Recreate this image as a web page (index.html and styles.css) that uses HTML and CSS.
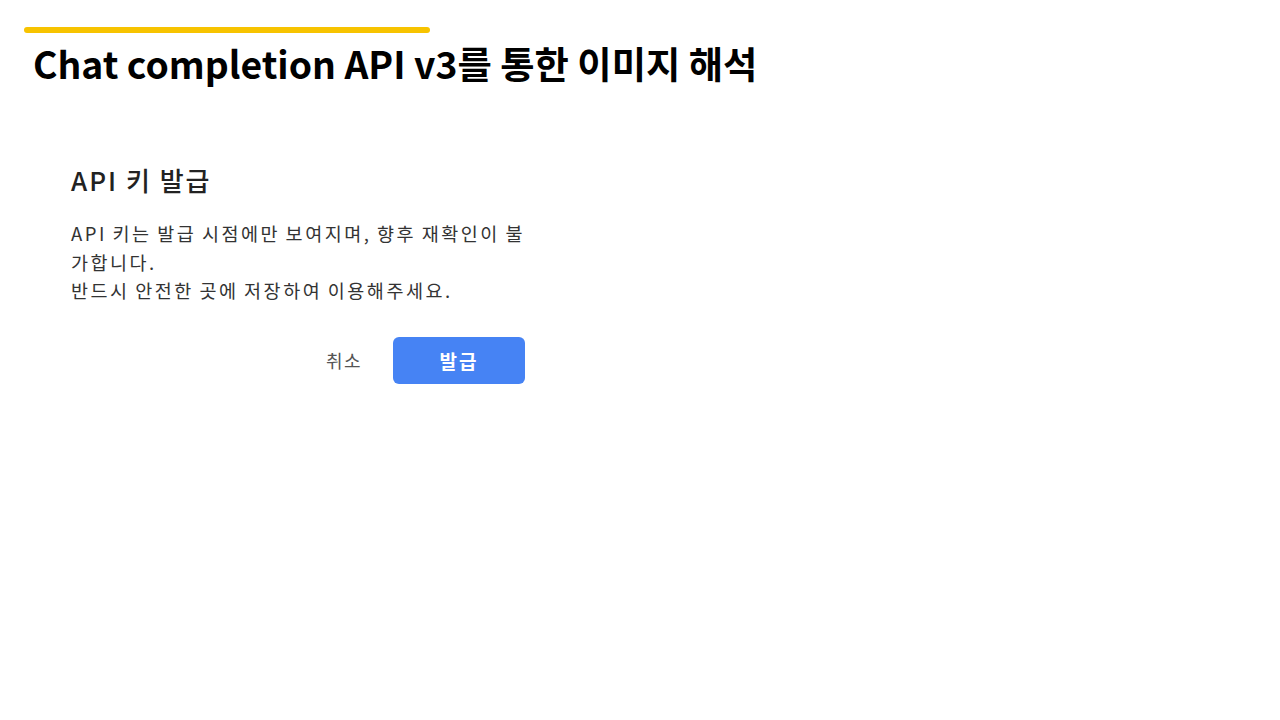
FILE: index.html
```html
<!DOCTYPE html>
<html>
<head>
    <title>Chat completion API v3</title>
    <meta charset="UTF-8">
    <meta name="viewport" content="width=device-width, initial-scale=1">
    <link rel="stylesheet" href="styles.css">
</head>
<body>
    <div class="slide">
        <div class="accent"></div>
        <h1 class="title">Chat completion API v3를 통한 이미지 해석</h1>
        <div class="dialog">
            <h3>API 키 발급</h3>
            <p>API 키는 발급 시점에만 보여지며, 향후 재확인이 불가합니다.<br>반드시 안전한 곳에 저장하여 이용해주세요.</p>
            <div class="actions">
                <button class="cancel">취소</button>
                <button class="issue">발급</button>
            </div>
        </div>
    </div>
</body>
</html>
```

FILE: styles.css
```css
body {
    margin: 0;
    background: #fff;
    color: #000;
    font-family: "Noto Sans CJK KR", "Noto Sans", sans-serif;
}
.slide {
    width: 1280px;
    height: 720px;
    padding: 27px 0 0 24px;
    box-sizing: border-box;
}
.accent {
    width: 406px;
    height: 6px;
    border-radius: 3px;
    background: #f7c300;
}
.title {
    margin: 6px 0 0 9px;
    font-size: 37.3px;
    line-height: 48px;
    font-weight: 700;
}
.dialog {
    width: 462px;
    margin: 76px 0 0 47px;
}
.dialog h3 {
    margin: 0;
    font-size: 26px;
    line-height: 34px;
    font-weight: 500;
    letter-spacing: 2px;
    color: #222;
}
.dialog p {
    margin: 22px 0 0;
    font-size: 18.5px;
    line-height: 28.5px;
    letter-spacing: 2.5px;
    word-spacing: -1px;
    word-break: break-all;
    color: #333;
}
.actions {
    display: flex;
    justify-content: flex-end;
    align-items: center;
    gap: 31px;
    margin-top: 32px;
    padding-right: 8px;
}
button {
    border: 0;
    background: none;
    font-family: "Noto Sans CJK KR", sans-serif;
    font-size: 18px;
    letter-spacing: 1.5px;
}
.cancel {
    color: #555;
    padding: 0;
}
.issue {
    width: 132px;
    height: 47px;
    border-radius: 6px;
    background: #4683f4;
    color: #fff;
    font-size: 19px;
    font-weight: 700;
    letter-spacing: 2px;
}
```
